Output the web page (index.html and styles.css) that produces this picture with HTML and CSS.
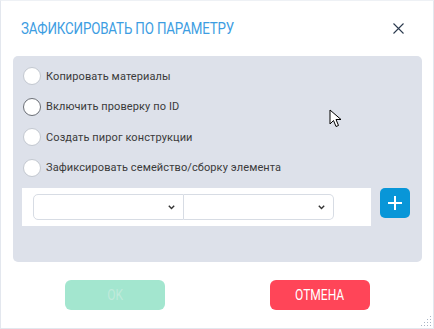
FILE: index.html
```html
<!DOCTYPE html>
<html>
<head>
    <meta charset="utf-8">
    <title>Зафиксировать по параметру</title>
    <link rel="stylesheet" href="styles.css">
</head>
<body>
<div class="dialog">
    <div class="head">
        <span class="title">Зафиксировать по параметру</span>
        <svg class="close" width="11" height="11" viewBox="0 0 11 11">
            <path d="M0.5 0.5 L10.5 10.5 M10.5 0.5 L0.5 10.5" stroke="#2b3a4e" stroke-width="1.1"/>
        </svg>
    </div>

    <div class="panel">
        <ul class="opts">
            <li><span class="radio"></span>Копировать материалы</li>
            <li><span class="radio dark"></span>Включить проверку по ID</li>
            <li><span class="radio"></span>Создать пирог конструкции</li>
            <li><span class="radio"></span>Зафиксировать семейство/сборку элемента</li>
        </ul>
        <div class="row">
            <div class="selects">
                <div class="sel">
                    <svg width="7" height="5" viewBox="0 0 7 5"><path d="M0.8 0.8 L3.5 3.5 L6.2 0.8" fill="none" stroke="#333" stroke-width="1.4"/></svg>
                </div>
                <div class="sel">
                    <svg width="7" height="5" viewBox="0 0 7 5"><path d="M0.8 0.8 L3.5 3.5 L6.2 0.8" fill="none" stroke="#333" stroke-width="1.4"/></svg>
                </div>
            </div>
            <div class="add">
                <svg width="16" height="16" viewBox="0 0 16 16"><path d="M8 1 V15 M1 8 H15" stroke="#fff" stroke-width="2"/></svg>
            </div>
        </div>
        <svg class="cursor" width="14" height="20" viewBox="0 0 14 20">
            <path d="M1 1 L1 15 L4.5 11.5 L7 17.5 L9.5 16.5 L7 10.5 L12 10.5 Z" fill="#fff" stroke="#000" stroke-width="1" stroke-linejoin="miter"/>
        </svg>
    </div>

    <div class="foot">
        <button class="btn ok"><span>OK</span></button>
        <button class="btn cancel"><span>Отмена</span></button>
    </div>
    <svg class="grip" width="11" height="11" viewBox="0 0 11 11">
        <g fill="#a9b4c4">
            <rect x="9" y="0" width="1" height="1"/>
            <rect x="6" y="3" width="1" height="1"/><rect x="9" y="3" width="1" height="1"/>
            <rect x="3" y="6" width="1" height="1"/><rect x="6" y="6" width="1" height="1"/><rect x="9" y="6" width="1" height="1"/>
            <rect x="0" y="9" width="1" height="1"/><rect x="3" y="9" width="1" height="1"/><rect x="6" y="9" width="1" height="1"/><rect x="9" y="9" width="1" height="1"/>
        </g>
    </svg>
</div>
</body>
</html>
```

FILE: styles.css
```css
html,
body,
ul,
li {
    margin: 0;
    padding: 0;
    border: 0;
    list-style: none;
}

* {
    box-sizing: border-box;
}

body {
    background: #fff;
    font-family: Roboto, "Liberation Sans", sans-serif;
    color: #333;
}

.dialog {
    position: relative;
    width: 434px;
    height: 329px;
    border: 1px solid #e3e7ee;
    border-top-color: #eef1f5;
    background: #fff;
}

.head {
    display: flex;
    align-items: center;
    justify-content: space-between;
    height: 54px;
    padding: 0 29px 0 20px;
}

/* шрифт в оригинале узкий, поэтому сжимаем */
.title {
    display: inline-block;
    color: #3d9de2;
    font-size: 16px;
    text-transform: uppercase;
    letter-spacing: -0.2px;
    transform: scale(0.835, 1.05);
    transform-origin: left center;
    white-space: nowrap;
}

.close {
    margin-top: 1px;
}

.panel {
    position: relative;
    margin: 1px 11px 0 12px;
    height: 206px;
    background: #dde1ea;
    border-radius: 5px;
    padding: 5px 10px 0 9px;
}

.opts li {
    display: flex;
    align-items: center;
    height: 30.5px;
    font-size: 11px;
    letter-spacing: 0.1px;
    color: #3a3a3a;
}

.radio {
    flex-shrink: 0;
    width: 18px;
    height: 18px;
    margin-left: 1px;
    border: 1px solid #c3c8d0;
    border-radius: 50%;
    background: #fff;
    margin-right: 5px;
}

.radio.dark {
    border-color: #6b6f76;
}

.row {
    display: flex;
    align-items: flex-start;
    margin-top: 5px;
}

.selects {
    flex-shrink: 0;
    display: flex;
    width: 349px;
    height: 38px;
    background: #fff;
    padding: 6px 37px 0 11px;
}

.sel {
    flex: 1;
    height: 26px;
    border: 1px solid #d7dce4;
    background: #fff;
    display: flex;
    align-items: center;
    justify-content: flex-end;
    padding-right: 8px;
}

.sel:first-child {
    border-radius: 5px 0 0 5px;
}

.sel:last-child {
    border-left: 0;
    border-radius: 0 5px 5px 0;
}

.add {
    flex-shrink: 0;
    width: 30px;
    height: 30px;
    margin-left: 9px;
    border-radius: 5px;
    background: #0896d8;
    display: flex;
    align-items: center;
    justify-content: center;
}

.cursor {
    position: absolute;
    left: 316px;
    top: 53px;
}

.foot {
    display: flex;
    justify-content: space-between;
    padding: 18px 63px 0 64px;
}

.btn {
    width: 100px;
    height: 30px;
    border: 0;
    border-radius: 6px;
    font-family: Roboto, "Liberation Sans", sans-serif;
    font-size: 14px;
    text-transform: uppercase;
}

.btn span {
    display: inline-block;
    transform: scaleX(0.86);
}

.ok {
    background: #a3e6cf;
    color: #bfeadb;
}

.cancel {
    background: #ff4558;
    color: #fff;
}

.grip {
    position: absolute;
    right: 1px;
    bottom: 1px;
}
```
